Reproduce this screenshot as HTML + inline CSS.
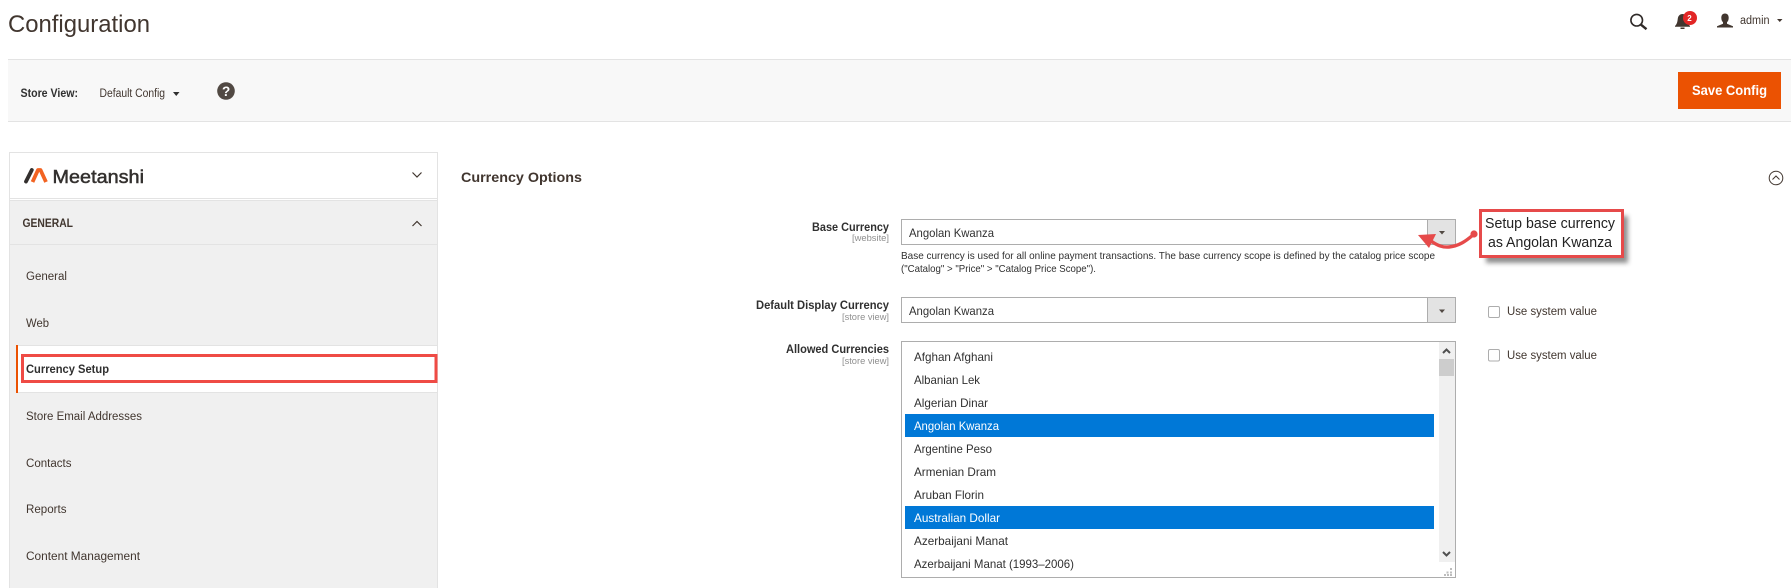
<!DOCTYPE html>
<html lang="en"><head><meta charset="utf-8"><title>Configuration</title>
<style>
html,body{margin:0;padding:0;background:#fff;width:1791px;height:588px;overflow:hidden}
svg{display:block}
text{font-family:"Liberation Sans",Arial,sans-serif;fill:#41362f;font-size:12px}
.b{font-weight:700;font-size:11.5px;fill:#303030}
.s{font-size:9px;fill:#8f8f8f}
.h{font-size:10.5px;fill:#303030}
.o{fill:#303030}
.w{fill:#fff}
</style></head><body>
<svg width="1791" height="588" viewBox="0 0 1791 588" xmlns="http://www.w3.org/2000/svg">
<defs><filter id="sh" x="-20%" y="-30%" width="140%" height="170%"><feGaussianBlur stdDeviation="2.5"/></filter></defs>
<rect width="1791" height="588" fill="#fff"/>
<text x="8" y="32" style="font-size:24px" textLength="142" lengthAdjust="spacingAndGlyphs">Configuration</text>

<!-- top right icons -->
<g fill="none" stroke="#2f2a28" stroke-width="1.600"><circle cx="1636.700" cy="20.200" r="5.800"/><path d="M1641 24.700l5.500 4.500" stroke-width="2.400"/></g>
<path d="M1675 26c2-2 2.400-4 2.800-7.500 .3-2.500 2-4.500 4.700-4.500s4.400 2 4.700 4.500c.4 3.500 .8 5.500 2.800 7.500v.7h-15z" fill="#41362f"/><rect x="1680.500" y="27.500" width="4" height="1.500" fill="#41362f"/>
<circle cx="1690" cy="18" r="7" fill="#e22626"/>
<text x="1687.300" y="21" class="w" style="font-size:8px;font-weight:700;fill:#fff">2</text>
<path d="M1725 13.500c2.600 0 3.700 2 3.700 4.300 0 2.200-.8 3.800-1.700 4.500v1.500l6 2.400v1.300h-16v-1.300l6-2.400v-1.500c-.9-.7-1.700-2.300-1.700-4.500 0-2.300 1.100-4.300 3.700-4.300z" fill="#41362f"/>
<text x="1740" y="24" style="font-size:11.500px" textLength="29.500" lengthAdjust="spacingAndGlyphs">admin</text>
<path d="M1777 19h5.500l-2.750 3z" fill="#41362f"/>

<!-- toolbar -->
<rect x="8" y="59" width="1783" height="63" fill="#f8f8f8"/>
<rect x="8" y="59" width="1783" height="1" fill="#e3e3e3"/>
<rect x="8" y="121" width="1783" height="1" fill="#e3e3e3"/>
<text x="20.500" y="97" class="b" textLength="57.500" lengthAdjust="spacingAndGlyphs">Store View:</text>
<text x="99.500" y="97" style="font-size:11.500px" textLength="65.500" lengthAdjust="spacingAndGlyphs">Default Config</text>
<path d="M173 92h6.500l-3.250 4z" fill="#303030"/>
<circle cx="226" cy="91" r="8.800" fill="#514943"/>
<text x="222" y="96" style="font-size:13.500px;font-weight:700;fill:#fff">?</text>
<rect x="1678" y="72" width="103" height="37" fill="#eb5202"/>
<text x="1692" y="95" style="font-size:14px;font-weight:700;fill:#fff" textLength="75" lengthAdjust="spacingAndGlyphs">Save Config</text>

<!-- sidebar -->
<rect x="9.500" y="152.500" width="428" height="46" fill="#fff" stroke="#e3e3e3"/>
<rect x="9" y="200" width="429" height="388" fill="#f0f0f0"/>
<rect x="9" y="198" width="1" height="390" fill="#e3e3e3"/>
<rect x="437" y="198" width="1" height="390" fill="#e3e3e3"/>
<rect x="9" y="200" width="429" height="1" fill="#e3e3e3"/>
<rect x="9" y="244" width="429" height="1" fill="#e3e3e3"/>
<path d="M26 181.500l5.800-11.500" fill="none" stroke="#33302e" stroke-width="3.800" stroke-linecap="round"/>
<path d="M32.500 182l5.500-12h2.500l5.500 12" fill="none" stroke="#f26322" stroke-width="3.800" stroke-linejoin="round"/>
<text x="52.500" y="183" style="font-size:18.500px;fill:#33302e;stroke:#33302e;stroke-width:.5" textLength="91.500" lengthAdjust="spacingAndGlyphs">Meetanshi</text>
<path d="M412.500 172.500l4.500 4.500 4.500-4.500" fill="none" stroke="#41362f" stroke-width="1.200"/>
<path d="M412.500 226l4.500-4.500 4.500 4.500" fill="none" stroke="#41362f" stroke-width="1.200"/>
<text x="22.500" y="227" class="b" style="fill:#41362f" textLength="50.500" lengthAdjust="spacingAndGlyphs">GENERAL</text>
<text x="26" y="280" style="font-size:11.500px" textLength="41" lengthAdjust="spacingAndGlyphs">General</text>
<text x="26" y="327" style="font-size:11.500px" textLength="23" lengthAdjust="spacingAndGlyphs">Web</text>
<rect x="18" y="345" width="419" height="48" fill="#fff"/>
<rect x="18" y="345" width="419" height="1" fill="#e3e3e3"/>
<rect x="18" y="392" width="419" height="1" fill="#e3e3e3"/>
<rect x="16" y="345" width="2" height="48" fill="#eb5202"/>
<rect x="22.500" y="355.500" width="413.500" height="26" fill="none" stroke="#ef4b45" stroke-width="3"/>
<text x="26" y="373" class="b" style="font-size:12px" textLength="83" lengthAdjust="spacingAndGlyphs">Currency Setup</text>
<text x="26" y="420" style="font-size:11.500px" textLength="116" lengthAdjust="spacingAndGlyphs">Store Email Addresses</text>
<text x="26" y="467" style="font-size:11.500px" textLength="45.500" lengthAdjust="spacingAndGlyphs">Contacts</text>
<text x="26" y="513" style="font-size:11.500px" textLength="40.500" lengthAdjust="spacingAndGlyphs">Reports</text>
<text x="26" y="560" style="font-size:11.500px" textLength="114" lengthAdjust="spacingAndGlyphs">Content Management</text>

<!-- main -->
<text x="461" y="182" style="font-size:14px;font-weight:700;fill:#41362f" textLength="121" lengthAdjust="spacingAndGlyphs">Currency Options</text>
<circle cx="1776" cy="178" r="6.800" fill="none" stroke="#41362f" stroke-width="1"/>
<path d="M1772.500 179.500l3.500-3.500 3.500 3.500" fill="none" stroke="#41362f" stroke-width="1"/>

<text x="812" y="231" class="b" textLength="77" lengthAdjust="spacingAndGlyphs">Base Currency</text>
<text x="852" y="241" class="s" textLength="37" lengthAdjust="spacingAndGlyphs">[website]</text>
<rect x="901.500" y="219.500" width="554" height="25" fill="#fff" stroke="#adadad"/>
<rect x="1427.500" y="219.500" width="28" height="25" fill="#e3e3e3" stroke="#adadad"/>
<path d="M1439 231h6l-3 3.500z" fill="#514943"/>
<text x="909" y="237" class="o" textLength="85" lengthAdjust="spacingAndGlyphs">Angolan Kwanza</text>
<text x="901" y="259" class="h" textLength="534" lengthAdjust="spacingAndGlyphs">Base currency is used for all online payment transactions. The base currency scope is defined by the catalog price scope</text>
<text x="901" y="272" class="h" textLength="195" lengthAdjust="spacingAndGlyphs">("Catalog" &gt; "Price" &gt; "Catalog Price Scope").</text>

<text x="756" y="309" class="b" textLength="133" lengthAdjust="spacingAndGlyphs">Default Display Currency</text>
<text x="842" y="320" class="s" textLength="47" lengthAdjust="spacingAndGlyphs">[store view]</text>
<rect x="901.500" y="297.500" width="554" height="25" fill="#fff" stroke="#adadad"/>
<rect x="1427.500" y="297.500" width="28" height="25" fill="#e3e3e3" stroke="#adadad"/>
<path d="M1439 309.500h6l-3 3.500z" fill="#514943"/>
<text x="909" y="315" class="o" textLength="85" lengthAdjust="spacingAndGlyphs">Angolan Kwanza</text>
<rect x="1488.500" y="306.500" width="11" height="11" rx="1.500" fill="#fff" stroke="#adadad"/>
<text x="1507" y="315" style="font-size:11.500px" textLength="90" lengthAdjust="spacingAndGlyphs">Use system value</text>

<text x="786" y="353" class="b" textLength="103" lengthAdjust="spacingAndGlyphs">Allowed Currencies</text>
<text x="842" y="364" class="s" textLength="47" lengthAdjust="spacingAndGlyphs">[store view]</text>
<rect x="901.500" y="341.500" width="554" height="236" fill="#fff" stroke="#adadad"/>
<rect x="1439" y="342" width="16" height="220" fill="#f0f0f0"/>
<rect x="1439" y="359" width="15" height="17" fill="#cdcdcd"/>
<path d="M1443 353l3.500-3.500 3.500 3.500" fill="none" stroke="#505050" stroke-width="2"/>
<path d="M1443 552l3.500 3.500 3.500-3.500" fill="none" stroke="#505050" stroke-width="2"/>
<path d="M1450 568h2v2h-2zM1446.500 571.500h2v2h-2zM1450 571.500h2v2h-2zM1444 574h2v2h-2zM1447 574h2v2h-2zM1450 574h2v2h-2z" fill="#bdbdbd"/>
<rect x="905" y="414" width="529" height="23" fill="#0078d7"/>
<rect x="905" y="506" width="529" height="23" fill="#0078d7"/>
<text x="914" y="361" class="o" textLength="79" lengthAdjust="spacingAndGlyphs">Afghan Afghani</text>
<text x="914" y="384" class="o" textLength="66" lengthAdjust="spacingAndGlyphs">Albanian Lek</text>
<text x="914" y="407" class="o" textLength="74" lengthAdjust="spacingAndGlyphs">Algerian Dinar</text>
<text x="914" y="430" style="fill:#fff" textLength="85" lengthAdjust="spacingAndGlyphs">Angolan Kwanza</text>
<text x="914" y="453" class="o" textLength="78" lengthAdjust="spacingAndGlyphs">Argentine Peso</text>
<text x="914" y="476" class="o" textLength="82" lengthAdjust="spacingAndGlyphs">Armenian Dram</text>
<text x="914" y="499" class="o" textLength="70" lengthAdjust="spacingAndGlyphs">Aruban Florin</text>
<text x="914" y="522" style="fill:#fff" textLength="86" lengthAdjust="spacingAndGlyphs">Australian Dollar</text>
<text x="914" y="545" class="o" textLength="94" lengthAdjust="spacingAndGlyphs">Azerbaijani Manat</text>
<text x="914" y="568" class="o" textLength="160" lengthAdjust="spacingAndGlyphs">Azerbaijani Manat (1993–2006)</text>
<rect x="1488.500" y="349.500" width="11" height="11.500" rx="1.500" fill="#fff" stroke="#adadad"/>
<text x="1507" y="359" style="font-size:11.500px" textLength="90" lengthAdjust="spacingAndGlyphs">Use system value</text>

<!-- callout -->
<rect x="1486" y="216" width="142" height="47" fill="#555" opacity=".65" filter="url(#sh)"/>
<rect x="1480.500" y="210.500" width="142" height="46" fill="#fff" stroke="#e64a4a" stroke-width="3"/>
<text x="1485" y="228" style="font-size:15px;fill:#222" textLength="130" lengthAdjust="spacingAndGlyphs">Setup base currency</text>
<text x="1488" y="247" style="font-size:15px;fill:#222" textLength="124" lengthAdjust="spacingAndGlyphs">as Angolan Kwanza</text>
<path d="M1473 235c-7 6-14 11-24 12-6 .5-11-1-18-6" fill="none" stroke="#e64a4a" stroke-width="3.400"/>
<circle cx="1474" cy="234" r="3.600" fill="#e64a4a"/>
<path d="M1418 235l18-1-7 14z" fill="#e64a4a"/>
</svg>
</body></html>
